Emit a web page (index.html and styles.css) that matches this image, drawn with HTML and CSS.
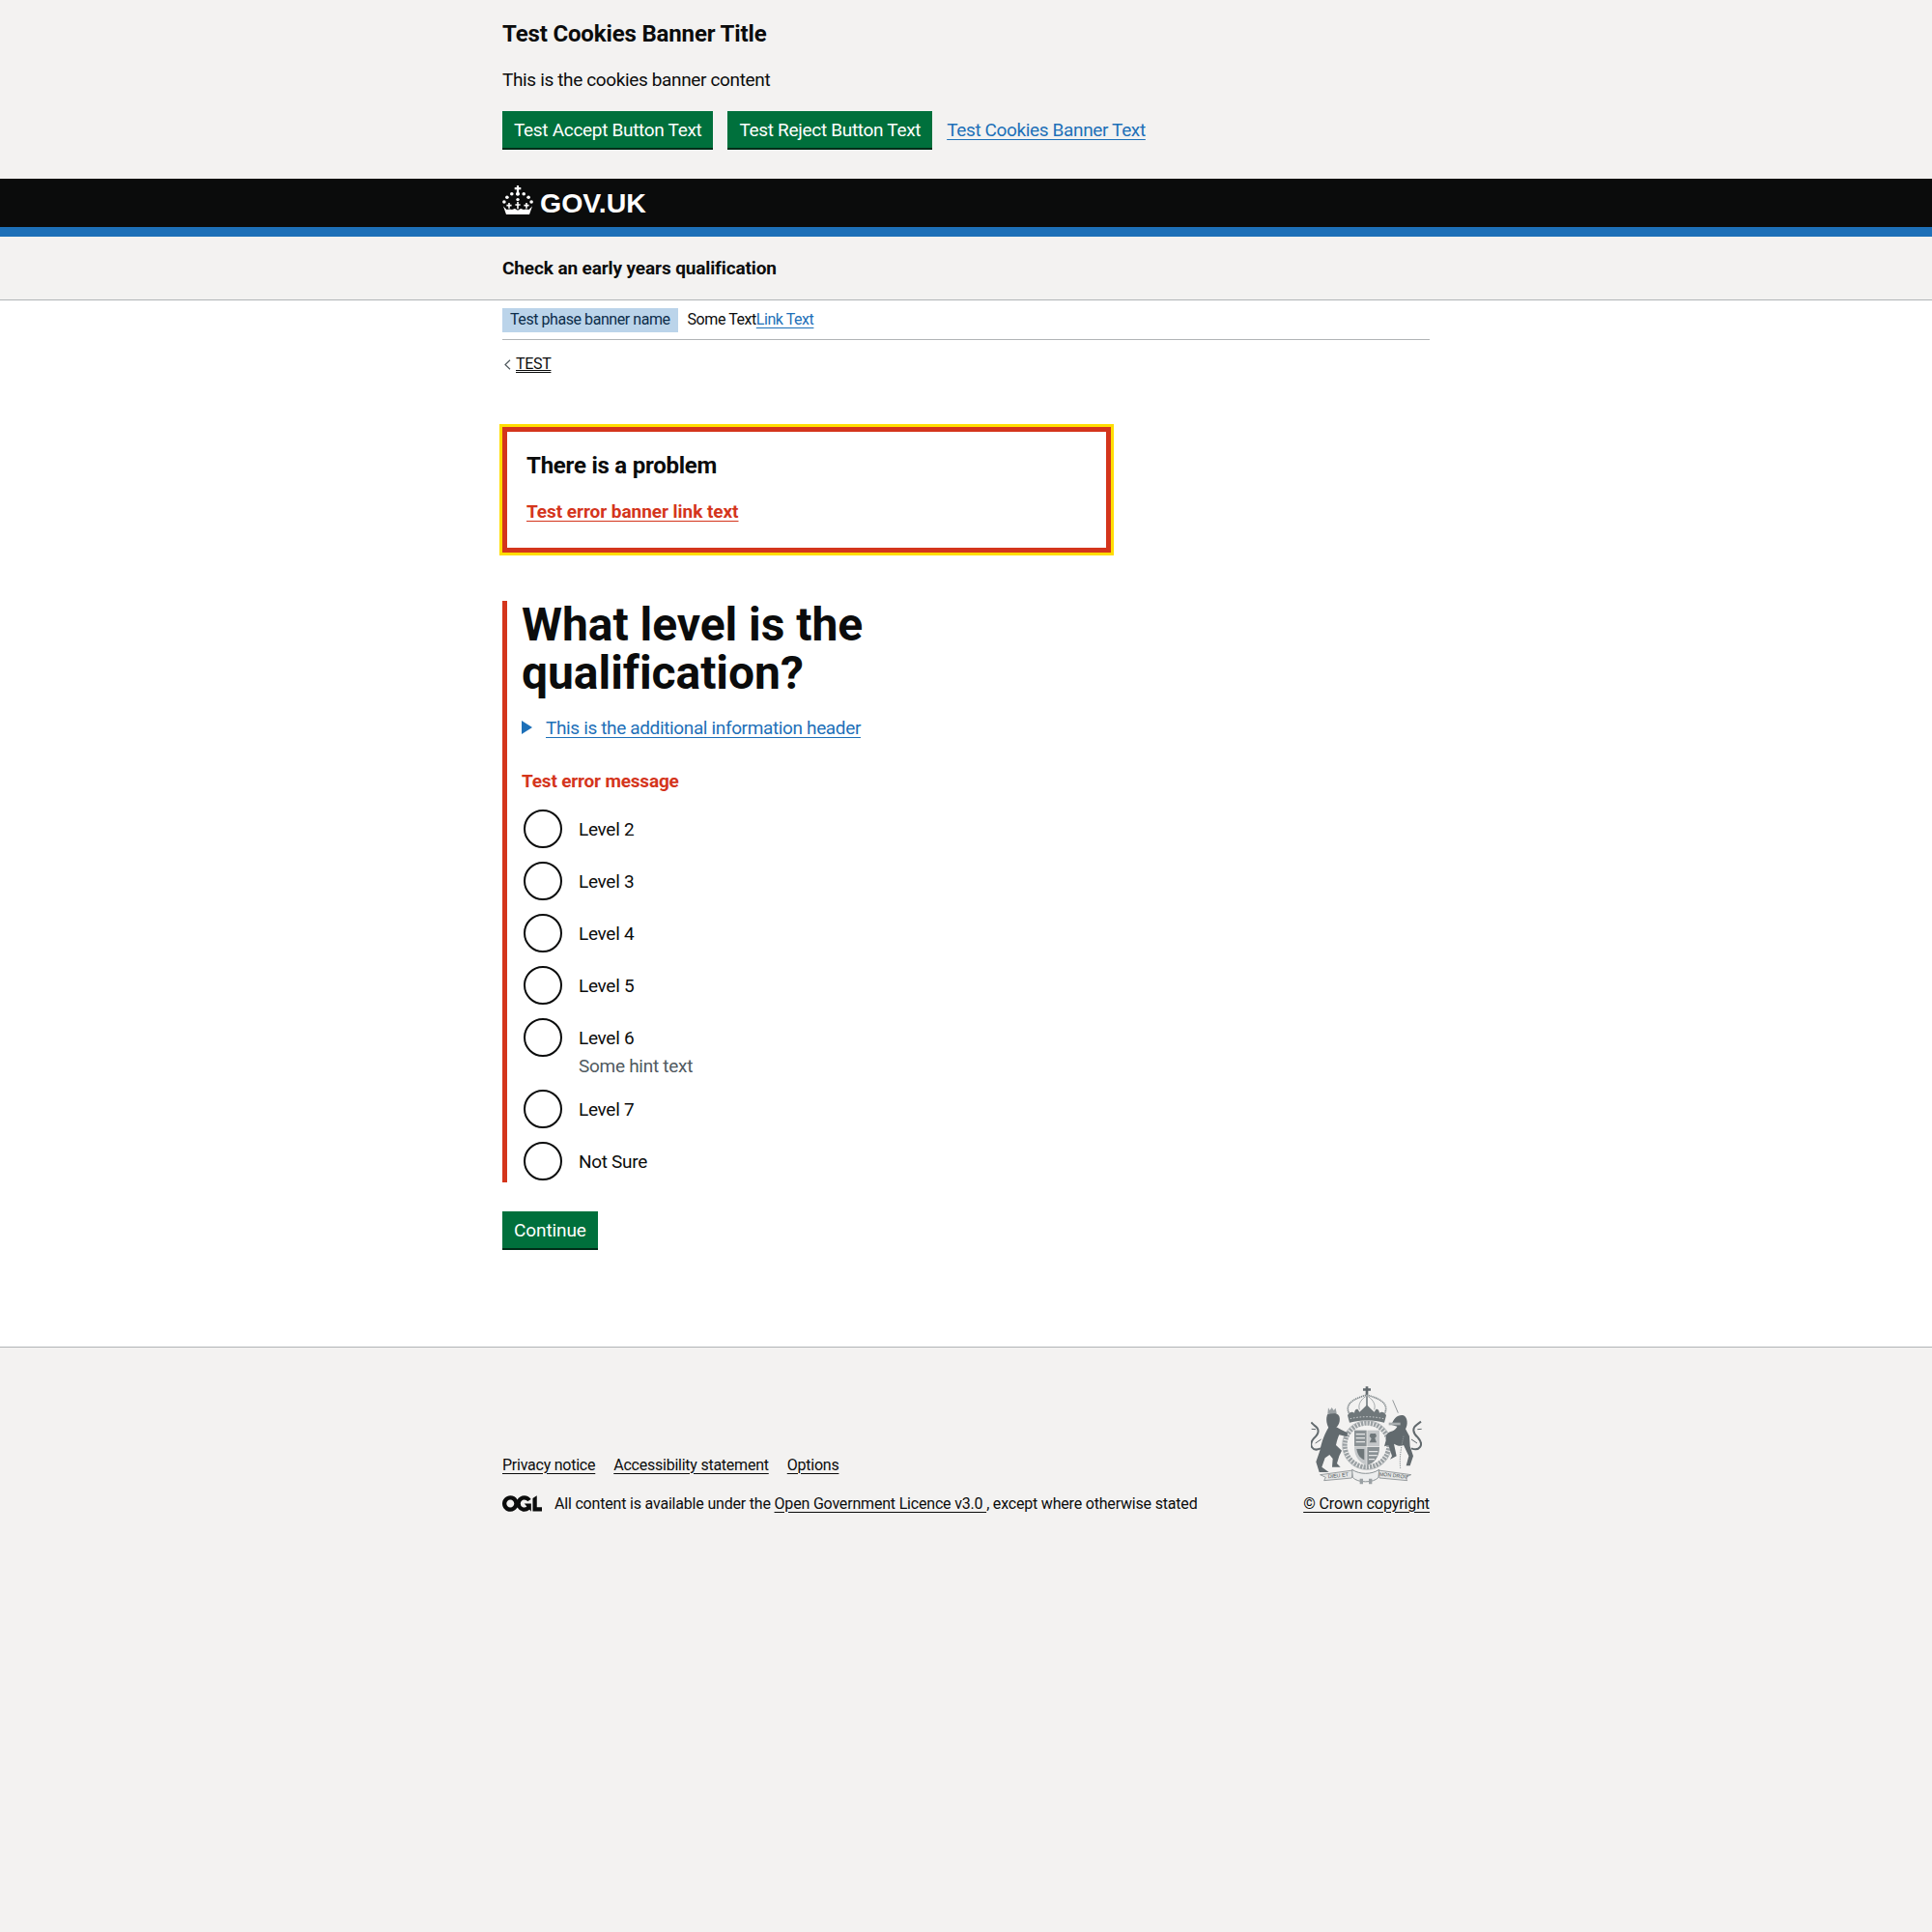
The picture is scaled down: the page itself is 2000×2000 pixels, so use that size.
FILE: index.html
```html
<!DOCTYPE html>
<html lang="en">
<head>
<meta charset="utf-8">
<title>What level is the qualification?</title>
<link rel="stylesheet" href="styles.css">
</head>
<body>
<section class="cookie">
  <div class="wrap">
    <h2 class="cookie-title">Test Cookies Banner Title</h2>
    <p class="cookie-text">This is the cookies banner content</p>
    <div class="cookie-actions">
      <a class="btn" href="#">Test Accept Button Text</a>
      <a class="btn" href="#">Test Reject Button Text</a>
      <a class="link cookie-link" href="#">Test Cookies Banner Text</a>
    </div>
  </div>
</section>
<header class="header">
  <div class="wrap header-in">
    <svg class="crown" viewBox="0 0 32 30" width="32" height="30" aria-hidden="true">
      <path fill="currentColor" d="M14.9 0h2.2v2h2.2v2.2h-2.2v2.4l.9 2c.3 1.2-.7 2.2-2 2.2s-2.3-1-2-2.2l.9-2V4.2h-2.2V2h2.2z"/>
      <circle cx="9.8" cy="8.8" r="1.8" fill="currentColor"/><circle cx="22.2" cy="8.8" r="1.8" fill="currentColor"/>
      <circle cx="4.9" cy="12.2" r="1.8" fill="currentColor"/><circle cx="27.1" cy="12.2" r="1.8" fill="currentColor"/>
      <circle cx="1.9" cy="17" r="1.8" fill="currentColor"/><circle cx="30.1" cy="17" r="1.8" fill="currentColor"/>
      <circle cx="16" cy="14.6" r="1.7" fill="currentColor"/>
      <path fill="currentColor" d="M15.2 17h1.6v2.2h1.8v1.6h-1.8v3.4h-1.6v-3.4h-1.8v-1.6h1.8zM6.2 18h1.6v1.8h1.8v1.6H7.8v2.4H6.2v-2.4H4.4v-1.6h1.8zM24.2 18h1.6v1.8h1.8v1.6h-1.8v2.4h-1.6v-2.4h-1.8v-1.6h1.8z"/>
      <path fill="currentColor" d="M1 21.5l3.5 3.5 3-.6 2.5 .6 3-1 3 1.8 3-1.8 3 1 2.5-.6 3 .6 3.5-3.5-3 8.5H4z"/>
    </svg>
    <span class="logotype">GOV.UK</span>
  </div>
</header>
<div class="service"><div class="wrap"><span class="service-name">Check an early years qualification</span></div></div>
<main class="wrap main">
  <div class="phase">
    <strong class="tag">Test phase banner name</strong>
    <span class="phase-text">Some Text<a class="link" href="#">Link Text</a></span>
  </div>
  <a class="back" href="#"><svg class="chev" viewBox="0 0 7 11" width="7" height="11" aria-hidden="true"><path d="M6 .7L1 5.5l5 4.8" fill="none" stroke="#505a5f" stroke-width="1.2"/></svg><span>TEST</span></a>
  <div class="error-box">
    <h2 class="error-title">There is a problem</h2>
    <a class="error-link" href="#">Test error banner link text</a>
  </div>
  <form class="question">
    <h1 class="q-title">What level is the qualification?</h1>
    <details class="details"><summary class="summary"><span class="tri"></span><span class="link">This is the additional information header</span></summary></details>
    <p class="error-msg">Test error message</p>
    <div class="radios">
      <label class="radio"><input type="radio" name="l"><span class="r-text">Level 2</span></label>
      <label class="radio"><input type="radio" name="l"><span class="r-text">Level 3</span></label>
      <label class="radio"><input type="radio" name="l"><span class="r-text">Level 4</span></label>
      <label class="radio"><input type="radio" name="l"><span class="r-text">Level 5</span></label>
      <label class="radio"><input type="radio" name="l"><span class="r-text">Level 6<span class="hint">Some hint text</span></span></label>
      <label class="radio"><input type="radio" name="l"><span class="r-text">Level 7</span></label>
      <label class="radio"><input type="radio" name="l"><span class="r-text">Not Sure</span></label>
    </div>
  </form>
  <a class="btn continue" href="#">Continue</a>
</main>
<footer class="footer">
  <div class="wrap footer-in">
    <div class="footer-left">
      <nav class="footer-links">
        <a class="f-link" href="#">Privacy notice</a>
        <a class="f-link" href="#">Accessibility statement</a>
        <a class="f-link" href="#">Options</a>
      </nav>
      <div class="licence">
        <svg class="ogl" viewBox="0 0 483.2 195.7" width="41" height="17" aria-hidden="true"><path fill="currentColor" d="M421.5 142.8V.1l-50.7 32.3v161.1h112.4v-50.7zm-122.3-9.6A47.12 47.12 0 0 1 221 97.8c0-26 21.1-47.1 47.1-47.1 16.7 0 31.4 8.7 39.7 21.8l42.7-27.2A97.63 97.63 0 0 0 268.1 0c-36.5 0-68.3 20.1-85.1 49.7A98 98 0 0 0 97.8 0C43.9 0 0 43.9 0 97.8s43.9 97.8 97.8 97.8c36.5 0 68.3-20.1 85.1-49.7a97.76 97.76 0 0 0 149.6 25.4l19.4 22.4V98.5H268.1l30.9 34.7zM97.8 145c-26 0-47.1-21.1-47.1-47.1s21.1-47.1 47.1-47.1 47.2 21 47.2 47S123.8 145 97.8 145"/></svg>
        <span>All content is available under the <a class="f-link" href="#">Open Government Licence v3.0 </a>, except where otherwise stated</span>
      </div>
    </div>
    <div class="footer-right">
      <svg class="crest" viewBox="84 45 345 306" width="115" height="102" aria-hidden="true">
        <g fill="#626a6e" stroke="none">
          <path d="M254 46h8v6h8v7h-8v14h-8V59h-8v-7h8z"/>
          <path d="M202 128c-14-32 22-46 56-56 34 10 70 24 56 56" fill="none" stroke="#7f878a" stroke-width="5" stroke-dasharray="4 2"/>
          <path d="M235 118c-6-20 8-34 23-44 15 10 29 24 23 44" fill="none" stroke="#a4a9ab" stroke-width="3"/>
          <path d="M255 76h6v34h-6z" fill="#8b9295"/>
          <path d="M198 136c2-8 14-14 21-8 1-9 6-14 11-11l5 8c6-5 14-13 23-22 9 9 17 17 23 22l5-8c5-3 10 2 11 11 7-6 19 0 21 8l-6 22c-34-10-72-10-108 0z" fill="#6f777a"/>
          <path d="M206 146c32-8 72-8 104 0" fill="none" stroke="#c4c7c9" stroke-width="3" stroke-dasharray="5 5"/>
          <circle cx="258" cy="228" r="68" fill="none" stroke="#9aa0a3" stroke-width="14" stroke-dasharray="7 3"/>
          <circle cx="258" cy="228" r="76" fill="none" stroke="#7f878a" stroke-width="1.5"/>
          <path d="M219 182h38v50h-38z" fill="#8a9194"/>
          <path d="M259 182h38v50h-38z" fill="#c4c7c9"/>
          <path d="M219 234h38v56c-20-6-38-24-38-56z" fill="#c4c7c9"/>
          <path d="M259 234h38c0 32-16 50-38 56z" fill="#8a9194"/>
          <path d="M224 192h28v4h-28zM224 204h28v4h-28zM224 216h28v4h-28zM264 246h28v4h-28zM264 258h26v4h-26zM264 270h18v4h-18z" fill="#e4e5e5"/>
          <path d="M269 192h16l3 8-5 6 5 14h-22l6-12-6-8z" fill="#6f777a"/>
          <path d="M226 240h24v34c-10-4-20-12-24-34z" fill="#6f777a"/>
          <path d="M136 132c12-8 30-6 36 6 4 12 0 26-8 34l-24 4c-8-14-10-32-4-44z"/>
          <path d="M138 112l5 8 6-9 6 9 6-7 3 16-28 2z" fill="#9aa0a3"/>
          <path d="M140 172c15-7 25 0 38 8l20 10-2 12-24-6c-4 9-7 19-10 32l18 17-8 17-7 23 11 11h-26l2-26-10-12-14 10-10 28 22 16h-30l-10-32 12-35c6-30 16-55 28-73z"/>
          <path d="M114 238c-24 12-40-10-20-32 18-16 16-30 0-40l-9-9" fill="none" stroke="#626a6e" stroke-width="6"/>
          <path d="M86 178l13 1M116 210l-18 12" fill="none" stroke="#626a6e" stroke-width="3"/>
          <path d="M355 128l-17-40" fill="none" stroke="#626a6e" stroke-width="2"/>
          <path d="M335 165c5-20 20-33 37-29 13 6 14 29 6 42l12 22 2 32 10 30-10 30h-12l8-30-16-34c-10 4-20 2-30-4l8 38-20 10 6-10-11-34-13 4 6-22c-2-10 2-20 14-24 13-4 18-11 20-16z"/>
          <path d="M326 158h36v8h-36z" fill="#a9aeb0"/>
          <path d="M396 238c24 10 42-10 20-34-16-14-18-30-2-40l12-9" fill="none" stroke="#626a6e" stroke-width="6"/>
          <path d="M428 178l-13 1M396 210l18 12" fill="none" stroke="#626a6e" stroke-width="3"/>
          <path d="M372 200c-6 30-14 60-10 100" fill="none" stroke="#8d9497" stroke-width="3" stroke-dasharray="4 3"/>
          <path d="M113 320l102-14-4 24-86 8 5-10z" fill="#e4e5e5" stroke="#6f777a" stroke-width="2"/>
          <path d="M395 320l-102-14 4 24 86 8-5-10z" fill="#e4e5e5" stroke="#6f777a" stroke-width="2"/>
          <path d="M212 304c24 16 60 16 84 0l-2 24c-14 18-66 18-80 0z" fill="#eceded" stroke="#8d9497" stroke-width="3"/>
          <path d="M236 332h10v17h-10zM264 332h10v17h-10z" fill="#9aa0a3"/>
        </g>
        <text class="motto" x="138" y="331" transform="rotate(-6 138 331)">DIEU ET</text>
        <text class="motto" x="296" y="323" transform="rotate(6 296 323)">MON DROIT</text>
      </svg>
      <a class="f-link copyright" href="#">© Crown copyright</a>
    </div>
  </div>
</footer>
</body>
</html>
```
FILE: styles.css
```css
* { box-sizing: border-box; }
html, body { margin: 0; padding: 0; }
body {
  min-height: 100vh;
  display: flex;
  flex-direction: column;
  background: #fff;
  color: #0b0c0c;
  font-family: Roboto, "Liberation Sans", sans-serif;
  font-size: 19px;
  line-height: 25px;
  letter-spacing: -0.36px;
}
.wrap { width: 960px; margin: 0 auto; }
a { color: inherit; }

.cookie { background: #f3f2f1; padding: 20px 0 30px; }
.cookie-title { margin: 0 0 20px; font-size: 24px; line-height: 30px; font-weight: 700; letter-spacing: -0.15px; }
.cookie-text { margin: 0 0 20px; }
.cookie-actions { display: flex; align-items: center; gap: 15px; }
.cookie-link { margin-bottom: 1px; }

.btn {
  display: inline-block;
  height: 38px;
  margin-bottom: 2px;
  padding: 7px 12px 0;
  background: #00703c;
  box-shadow: 0 2px 0 #002d18;
  color: #fff;
  text-decoration: none;
  line-height: 25px;
  letter-spacing: -0.31px;
}
.link { color: #1d70b8; text-decoration: underline; text-decoration-thickness: 1px; text-underline-offset: 3px; }

.header { background: #0b0c0c; border-bottom: 10px solid #1d70b8; color: #fff; height: 60px; }
.header-in { display: flex; align-items: center; gap: 7px; height: 50px; }
.crown { flex: none; margin-bottom: 6px; }
.logotype { margin-bottom: 1px; font-family: "Liberation Sans", sans-serif; font-weight: 700; font-size: 28.5px; line-height: 30px; letter-spacing: 0; }

.service { background: #f3f2f1; border-bottom: 1px solid #b1b4b6; height: 66px; display: flex; align-items: center; padding-bottom: 1px; }
.service-name { font-weight: 700; letter-spacing: -0.12px; }

.main { flex: none; }
.phase {
  display: flex;
  align-items: center;
  gap: 10px;
  padding: 8px 0 7px;
  border-bottom: 1px solid #b1b4b6;
  font-size: 16px;
  line-height: 20px;
  letter-spacing: -0.44px;
}
.tag { padding: 2px 8px 3px; background: #bbd4ea; color: #0c2d4a; font-weight: 400; }
.phase-text { margin-bottom: 1px; }
.back { display: inline-flex; align-items: center; gap: 5px; margin: 15px 0 0 2px; font-size: 16px; line-height: 20px; letter-spacing: -0.32px; }
.back span { text-decoration: underline; text-decoration-thickness: 1px; text-underline-offset: 3px; }
.chev { flex: none; }

.error-box {
  width: 630px;
  margin-top: 53px;
  padding: 20px 20px 25px;
  border: 5px solid #d4351c;
  outline: 3px solid #ffdd00;
}
.error-title { margin: 0 0 20px; font-size: 24px; line-height: 30px; font-weight: 700; letter-spacing: -0.23px; }
.error-link { display: block; font-weight: 700; color: #d4351c; line-height: 25px; letter-spacing: -0.05px; text-decoration: underline; text-decoration-thickness: 1px; text-underline-offset: 3px; }

.question { margin-top: 50px; padding-left: 15px; border-left: 5px solid #d4351c; }
.q-title { width: 400px; margin: 0 0 19px; font-size: 48px; line-height: 50px; font-weight: 700; letter-spacing: -0.05px; }
.details { margin: 0; }
.summary { display: flex; align-items: center; list-style: none; }
.tri { width: 0; height: 0; margin-right: 14px; border-left: 11px solid #1d70b8; border-top: 7px solid transparent; border-bottom: 7px solid transparent; }
.error-msg { margin: 30px 0 15px; font-weight: 700; color: #d4351c; letter-spacing: -0.18px; }

.radios { display: flex; flex-direction: column; gap: 10px; }
.radio { display: flex; align-items: flex-start; min-height: 44px; letter-spacing: -0.3px; }
.radio input {
  appearance: none;
  flex: none;
  width: 40px;
  height: 40px;
  margin: 2px 17px 2px 2px;
  border: 2px solid #0b0c0c;
  border-radius: 50%;
  background: #fff;
}
.r-text { display: block; padding-top: 10px; }
.hint { display: block; margin-top: 4px; color: #505a5f; letter-spacing: -0.28px; }

.continue { margin-top: 30px; letter-spacing: -0.1px; }

.footer { flex: 1; margin-top: 100px; padding-top: 40px; background: #f3f2f1; border-top: 1px solid #b1b4b6; font-size: 16px; line-height: 20px; letter-spacing: -0.24px; }
.footer-in { display: flex; justify-content: space-between; align-items: flex-end; }
.f-link { text-decoration: underline; text-decoration-thickness: 1px; text-underline-offset: 3px; }
.footer-links { display: flex; gap: 19px; margin-bottom: 20px; }
.licence { display: flex; align-items: center; gap: 13px; letter-spacing: -0.19px; }
.ogl { flex: none; }
.footer-right { display: flex; flex-direction: column; align-items: center; gap: 10px; }
.crest { display: block; }
.motto { font-family: "Liberation Sans", sans-serif; font-size: 16px; fill: #4d5558; letter-spacing: 0; }
.copyright { letter-spacing: -0.1px; }
```
